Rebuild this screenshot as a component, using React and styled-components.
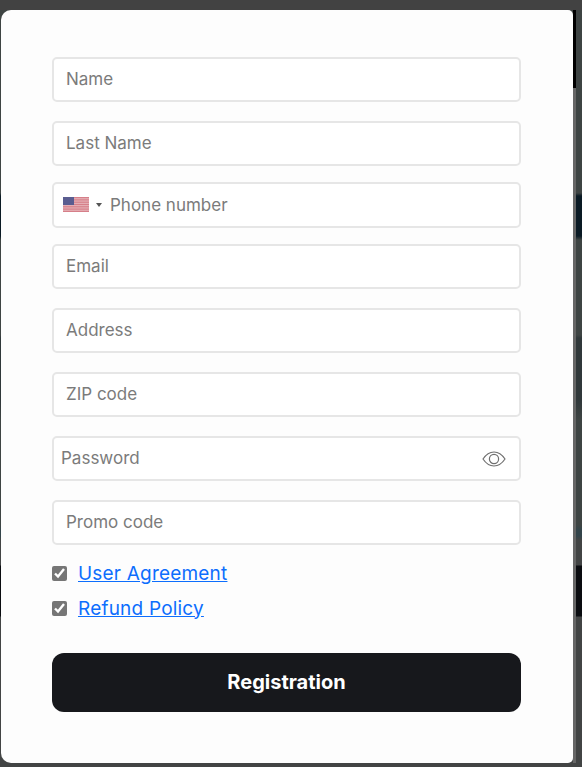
import React from 'react';
import styled, { createGlobalStyle } from 'styled-components';

const GlobalStyle = createGlobalStyle`
  html, body {
    margin: 0;
    height: 100%;
    overflow: hidden;
    background: #424242;
    font-family: Inter, "Noto Sans", "Liberation Sans", sans-serif;
  }
`;

// dimmed page behind the modal, only its edge is visible on the right
const Page = styled.div`
  display: flex;
  align-items: flex-start;
  height: 767px;
  padding: 10px 6px 4px 1px;
  box-sizing: border-box;
  background:
    linear-gradient(#424242 0 10px, transparent 10px),
    linear-gradient(
      #3e4443 0 193px,
      #0a1a24 196px 236px,
      #3e4443 240px 335px,
      #30383a 338px 400px,
      #3e4443 420px 525px,
      #33444a 530px 536px,
      #424444 540px 565px,
      #0a0c10 566px 616px,
      #424444 617px
    );
`;

const Card = styled.form`
  width: 572px;
  height: 753px;
  box-sizing: border-box;
  padding: 47px 52px 0 51px;
  background: #fdfdfd;
  border-radius: 10px 5px 5px 10px;
`;

const ScrollTrack = styled.div`
  width: 3px;
  height: 753px;
  background: #666;
`;

const ScrollThumb = styled.div`
  height: 78px;
  background: #000;
`;

const Field = styled.div`
  display: flex;
  align-items: center;
  height: ${p => (p.$tall ? 46 : 45)}px;
  margin-bottom: ${p => p.$gap ?? 19}px;
  box-sizing: border-box;
  padding: 0 13px 1px ${p => p.$left ?? 12}px;
  background: #fff;
  border: 2px solid #e6e6e6;
  border-radius: 5px;
`;

const Input = styled.input`
  flex: 1;
  min-width: 0;
  padding: 0;
  border: 0;
  outline: 0;
  background: transparent;
  font-family: inherit;
  font-size: 17px;
  color: #212529;

  &::placeholder {
    color: #7b7b7b;
    opacity: 1;
  }
`;

const FlagButton = styled.div`
  display: flex;
  align-items: center;
  margin-right: 8px;
`;

const Caret = styled.span`
  width: 0;
  height: 0;
  margin-left: 7px;
  border-left: 3.5px solid transparent;
  border-right: 3.5px solid transparent;
  border-top: 4px solid #555;
`;

const EyeButton = styled.span`
  display: flex;
  margin-left: 8px;
  margin-top: 1px;
`;

const CheckRow = styled.label`
  display: flex;
  align-items: center;
  gap: 11px;
  height: 20px;
  margin-bottom: 15px;
`;

const Checkbox = styled.input`
  width: 15px;
  height: 15px;
  margin: 0;
  accent-color: #767676;
`;

const PolicyLink = styled.a`
  font-size: 19px;
  letter-spacing: 0.2px;
  color: #0d6efd;
  text-decoration: underline;
`;

const Submit = styled.button`
  display: block;
  width: 100%;
  height: 59px;
  margin-top: 35px;
  padding: 0 0 1px;
  border: 0;
  border-radius: 12px;
  background: #17181c;
  color: #fff;
  font-family: inherit;
  font-size: 20px;
  font-weight: 700;
`;

const UsFlag = () => (
  <svg width="26" height="15" viewBox="0 0 26 15">
    <rect width="26" height="15" fill="#e6b4b9" />
    {[0, 2.3, 4.6, 6.9, 9.2, 11.5, 13.8].map(y => (
      <rect key={y} y={y} width="26" height="1.2" fill="#d67f89" />
    ))}
    <rect width="11" height="8" fill="#5a5d90" />
  </svg>
);

const EyeIcon = () => (
  <svg width="24" height="18" viewBox="0 0 24 18" fill="none" stroke="#6f6f6f" strokeWidth="1.2">
    <path d="M1 9C4 4.500 7.800 2 12 2s8 2.500 11 7c-3 4.500-6.800 7-11 7S4 13.500 1 9Z" />
    <circle cx="12" cy="9" r="4.600" />
  </svg>
);

const App = () => (
  <Page>
    <GlobalStyle />
    <Card>
      <Field><Input placeholder="Name" /></Field>
      <Field $gap={16}><Input placeholder="Last Name" /></Field>
      <Field $tall $gap={16} $left={9}>
        <FlagButton>
          <UsFlag />
          <Caret />
        </FlagButton>
        <Input placeholder="Phone number" />
      </Field>
      <Field><Input placeholder="Email" /></Field>
      <Field><Input placeholder="Address" /></Field>
      <Field><Input placeholder="ZIP code" /></Field>
      <Field $left={7}>
        <Input placeholder="Password" />
        <EyeButton><EyeIcon /></EyeButton>
      </Field>
      <Field $gap={18}><Input placeholder="Promo code" /></Field>
      <CheckRow>
        <Checkbox type="checkbox" defaultChecked />
        <PolicyLink href="#">User Agreement</PolicyLink>
      </CheckRow>
      <CheckRow>
        <Checkbox type="checkbox" defaultChecked />
        <PolicyLink href="#">Refund Policy</PolicyLink>
      </CheckRow>
      <Submit type="button">Registration</Submit>
    </Card>
    <ScrollTrack><ScrollThumb /></ScrollTrack>
  </Page>
);

export default App;
